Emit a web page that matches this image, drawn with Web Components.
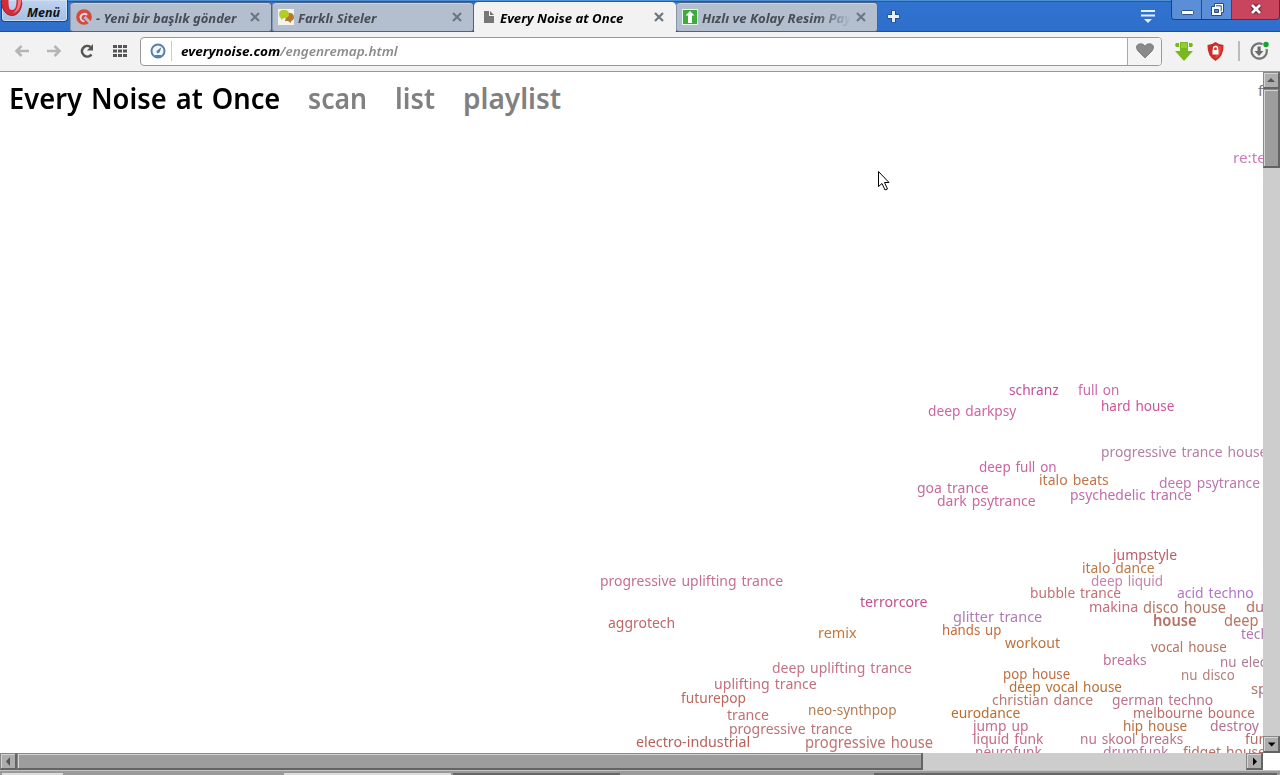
<!DOCTYPE html>
<html lang="tr">
<head>
<meta charset="utf-8">
<title>Every Noise at Once</title>
<style>
  html, body { margin: 0; height: 100%; overflow: hidden; background: #fff; }
  body { font-family: "Noto Sans", "Open Sans", sans-serif; }
</style>
</head>
<body>
<browser-window></browser-window>

<script>
// Text squeezed or stretched to a given width
class FitText extends HTMLElement {
  constructor() {
    super();
    this.attachShadow({ mode: 'open' });
    this.shadowRoot.innerHTML = `
      <style>
        :host { display: inline-block; flex: none; white-space: nowrap; }
        span { display: inline-block; vertical-align: top; transform-origin: 0 50%; }
      </style><span><slot></slot></span>`;
  }

  connectedCallback() {
    const width = Number(this.getAttribute('width'));
    if (!width) return;
    const span = this.shadowRoot.querySelector('span');
    const natural = span.offsetWidth;
    this.style.width = width + 'px';
    if (natural) span.style.transform = `scaleX(${width / natural})`;
  }
}

class BrowserTab extends HTMLElement {
  constructor() {
    super();
    this.attachShadow({ mode: 'open' });
    this.shadowRoot.innerHTML = `
      <style>
        :host {
          display: flex;
          align-items: center;
          box-sizing: border-box;
          width: 202px;
          height: 30px;
          padding: 0 11px 0 5px;
          gap: 4px;
          background: #b3bfcf;
          border: 1px solid #49648d;
          border-left-color: #8795aa;
          border-radius: 4px 4px 3px 3px;
          box-shadow: inset 0 1px #cbd4df;
          color: #484d55;
          font: italic 700 12.5px/20px "Noto Sans", sans-serif;
        }
        :host([active]) {
          background: #f2f2f2;
          border-color: #f2f2f2;
          border-radius: 4px 4px 0 0;
          box-shadow: none;
          color: #000;
        }
        .icon { display: flex; flex: none; width: 16px; height: 16px; }
        .label { flex: 1; min-width: 0; overflow: hidden; height: 20px; margin-top: 4px; }
        :host([fade]) .label { -webkit-mask-image: linear-gradient(90deg, #000 115px, transparent 149px); mask-image: linear-gradient(90deg, #000 115px, transparent 149px); }
        .close { flex: none; width: 10px; height: 10px; }
      </style>
      <div class="icon"><slot name="icon"></slot></div>
      <div class="label"><slot></slot></div>
      <svg class="close" viewBox="0 0 10 10"><path d="M1 1l8 8M9 1l-8 8" stroke="#6f7680" stroke-width="2.2"/></svg>
    `;
  }
}

class TabStrip extends HTMLElement {
  constructor() {
    super();
    this.attachShadow({ mode: 'open' });
    this.shadowRoot.innerHTML = `
      <style>
        :host {
          display: flex;
          align-items: flex-start;
          box-sizing: border-box;
          height: 32px;
          background: linear-gradient(#4d8fd0 0, #4d8fd0 1px, #275a9c 1px, #275a9c 2px, #3273d0 2px, #2f6fcb 31px, #234f93 31px);
        }
        svg { display: block; flex: none; }
        .menu {
          display: flex;
          box-sizing: border-box;
          width: 67px;
          height: 22px;
          margin-left: 1px;
          border: 1px solid #1e467e;
          border-top: 0;
          border-radius: 0 0 4px 4px;
          background: linear-gradient(#c0d4ee, #a3bee5);
          box-shadow: inset 0 0 0 1px #cfdff3;
          color: #111;
          font: italic 700 12.5px/25px "Noto Sans", sans-serif;
        }
        .menu svg { width: 25px; height: 18px; }
        .tabs { display: flex; margin: 2px 0 0 2px; }
        .add { margin: 10px 0 0 9px; }
        .panel { margin: 9px 15px 0 auto; }
        .controls {
          display: flex;
          width: 109px;
          height: 20px;
          box-sizing: border-box;
          border: 1px solid #1f3f70;
          border-top: 0;
          border-radius: 0 0 4px 4px;
          overflow: hidden;
        }
        .controls div { display: flex; justify-content: center; background: #5a8fd8; border-right: 1px solid #274b83; width: 29px; }
        .controls .x { background: #c9445d; flex: 1; border: 0; }
      </style>
      <div class="menu">
        <svg viewBox="0 0 25 18">
          <path d="M-1 0C-1 10 4 15.500 10 15.500S20 10 20 0h-5.500c0 7-1.500 10-4.500 10S6.500 7 6.500 0z" fill="#d42c39"/>
          <path d="M16 0h3c0 8-3 12-8 13c4-3 5-7 5-13z" fill="#ee7b83"/>
          <path d="M0 5c1 6 5 10.500 10 10.500s9-4 10-13" fill="none" stroke="#8f1823" stroke-width=".8"/>
        </svg>
        <fit-text width="33">Menü</fit-text>
      </div>
      <div class="tabs">
        <browser-tab>
          <svg slot="icon" width="16" height="16" viewBox="0 0 16 16"><circle cx="8" cy="8" r="7.800" fill="#d9483b"/><path d="M4.500 8.500A3.800 3.800 0 0 1 11 6" fill="none" stroke="#dde0e8" stroke-width="2"/><path d="M4.500 8q0 4 4 4.500" fill="none" stroke="#dde0e8" stroke-width="1.600"/><path d="M8.500 8l6 6" stroke="#b3bfcf" stroke-width="3"/></svg>
          <fit-text width="141">- Yeni bir başlık gönder</fit-text>
        </browser-tab>
        <browser-tab>
          <svg slot="icon" width="16" height="16" viewBox="0 0 16 16"><path d="M0 0h16v16H0z" fill="#f3f4ef"/><path d="M9 4h4q3 1 3 4t-3 4v2l-3-2H7z" fill="#b8792e"/><path d="M4 1h4q3 1 3 4t-3 4H6l-3 2V9Q1 8 1 5t3-4z" fill="#b4cc26"/></svg>
          <fit-text width="79">Farklı Siteler</fit-text>
        </browser-tab>
        <browser-tab active>
          <svg slot="icon" width="16" height="16" viewBox="0 0 16 16"><path d="M4 2h5v5h5v7H4z" fill="#777"/><path d="M10 2l4 4h-4z" fill="#777"/></svg>
          <fit-text width="123">Every Noise at Once</fit-text>
        </browser-tab>
        <browser-tab fade>
          <svg slot="icon" width="16" height="16" viewBox="0 0 16 16"><path d="M0 0h16v16H0z" fill="#eef7ee"/><path d="M1 1h14v14H1z" fill="#3eab3d"/><path d="M8 2l4.500 4.500H10V14H6V6.500H3.500z" fill="#fff"/></svg>
          <fit-text width="149">Hızlı ve Kolay Resim Pay</fit-text>
        </browser-tab>
      </div>
      <svg class="add" width="13" height="13" viewBox="0 0 13 13"><path d="M6.500 .5v12M.5 6.500h12" stroke="#1f4d93" stroke-width="5"/><path d="M6.500 1v11M1 6.500h11" stroke="#e6effa" stroke-width="3"/></svg>
      <svg class="panel" width="16" height="15" viewBox="0 0 16 15"><path d="M1 2h14M1 6.500h14" stroke="#e6effa" stroke-width="2"/><path d="M4 10h8l-4 4z" fill="#e6effa"/></svg>
      <div class="controls">
        <div><svg width="14" height="19"><rect x="1.500" y="10.500" width="12" height="4" rx="1" fill="#fff" stroke="#2d5188"/></svg></div>
        <div><svg width="14" height="19"><path d="M4.500 3.500h9v9h-2v3h-10v-9h3z" fill="#fff" stroke="#244c86"/><path d="M4.500 9.500h4v3h-4z" fill="#5a8fd8" stroke="#244c86"/><path d="M6 5.800h5.200v5.500" fill="none" stroke="#244c86"/></svg></div>
        <div class="x"><svg width="14" height="19"><path d="M3 5l8 8M11 5l-8 8" stroke="#6e2637" stroke-width="5"/><path d="M3 5l8 8M11 5l-8 8" stroke="#fff" stroke-width="2.700"/></svg></div>
      </div>
    `;
  }
}

class AddressBar extends HTMLElement {
  constructor() {
    super();
    this.attachShadow({ mode: 'open' });
    this.shadowRoot.innerHTML = `
      <style>
        :host {
          display: flex;
          align-items: center;
          box-sizing: border-box;
          height: 40px;
          padding: 0 11px 1px 14px;
          background: #f2f2f2;
          border-bottom: 1px solid #989898;
        }
        svg { display: block; flex: none; }
        .nav { display: flex; align-items: center; gap: 16.6px; width: 126px; }
        .field {
          display: flex;
          align-items: center;
          box-sizing: border-box;
          width: 1022px;
          height: 29px;
          padding-left: 9px;
          background: #fff;
          border: 1px solid #999;
          border-radius: 4px;
          font: italic 600 13px/20px "Noto Sans", sans-serif;
          color: #8c8c8c;
        }
        .field b { display: flex; font-weight: 700; color: #000; }
        .rule { width: 1px; height: 20px; margin: 0 9px 0 5px; background: #ccc; }
        .heart {
          display: flex;
          align-items: center;
          justify-content: center;
          width: 33px;
          height: 27px;
          margin-left: auto;
          border-left: 1px solid #aaa;
          border-radius: 0 3px 3px 0;
          background: #f4f4f4;
        }
        .tools { display: flex; align-items: center; margin-left: 13px; }
      </style>
      <div class="nav">
        <svg width="16" height="16" viewBox="0 0 16 16"><path d="M15 8H3M7.500 3l-5 5 5 5" fill="none" stroke="#b5b5b5" stroke-width="2.600"/></svg>
        <svg width="16" height="16" viewBox="0 0 16 16"><path d="M0 8h12M7.500 3l5 5-5 5" fill="none" stroke="#b5b5b5" stroke-width="2.600"/></svg>
        <svg width="16" height="16" viewBox="0 0 16 16"><path d="M12.500 11.500A5.300 5.300 0 1 1 11.500 4" fill="none" stroke="#555" stroke-width="2.600"/><path d="M14 1v6.500H8z" fill="#555"/></svg>
        <svg width="16" height="16" viewBox="0 0 16 16"><g fill="#555"><path d="M1 2h4v3H1zM6 2h4v3H6zM11 2h4v3h-4zM1 6.500h4v3H1zM6 6.500h4v3H6zM11 6.500h4v3h-4zM1 11h4v3H1zM6 11h4v3H6zM11 11h4v3h-4z"/></g></svg>
      </div>
      <div class="field">
        <svg width="16" height="16" viewBox="0 0 16 16"><circle cx="8" cy="8" r="6.500" fill="#f4f8fc" stroke="#5580ae" stroke-width="2"/><path d="M11.500 4L9.500 9.500 7 10.500 6.500 8z" fill="#5580ae"/><path d="M5 13h6" stroke="#5580ae" stroke-width="2"/></svg>
        <div class="rule"></div>
        <b><fit-text width="99">everynoise.com</fit-text></b><fit-text width="118">/engenremap.html</fit-text>
        <div class="heart">
          <svg width="18" height="16" viewBox="0 0 18 16"><path d="M9 15L2 8C-1 4 1 .8 4.500 .8C7 .8 8.500 2 9 3.500C9.500 2 11 .8 13.500 .8C17 .8 19 4 16 8z" fill="#8a8a8a" stroke="#707070" stroke-width=".8"/></svg>
        </div>
      </div>
      <div class="tools">
        <svg width="18" height="19" viewBox="0 0 18 19"><path d="M5 0h8v9h5l-9 10L0 9h5z" fill="#78b81e"/><path d="M1 1h3v4H1l-1-2zM17 1h-3v4h3l1-2z" fill="#78b81e"/><path d="M6 1h6v5H6z" fill="#91cc35"/></svg>
        <svg style="margin-left:14px" width="17" height="19" viewBox="0 0 17 19"><path d="M8.500 0q4 3 8 3 .5 11-8 16Q0 14 .5 3q4 0 8-3z" fill="#c92e2a"/><path d="M8.500 2q3 2 6 2.500 0 9-6 12z" fill="#e04b3e"/><path d="M5.500 8h6v4.500h-6z" fill="#fff"/><path d="M6.500 8V6.500a2 2 0 0 1 4 0V8" fill="none" stroke="#fff" stroke-width="1.300"/></svg>
        <div style="width:2px;height:20px;background:#bbb;margin:0 10px 0 14px"></div>
        <svg width="19" height="20" viewBox="0 0 19 20"><path d="M12.500 3.200A7.600 7.600 0 1 0 16.500 8" fill="none" stroke="#747474" stroke-width="2.200"/><path d="M7.500 5.500h3.200V10h2.800L9 15 4.500 10h3z" fill="#6c6c6c"/><circle cx="16" cy="3.500" r="2.700" fill="#14a32c"/></svg>
      </div>
    `;
  }
}

// Classic grey scroll bar: axis="x" or axis="y"
class ScrollBar extends HTMLElement {
  constructor() {
    super();
    this.attachShadow({ mode: 'open' });
  }

  connectedCallback() {
    const horizontal = this.getAttribute('axis') === 'x';
    const size = horizontal ? 'width' : 'height';
    const start = horizontal ? 'M9 3L5 7.500l4 4.500z' : 'M3 9h8L7 5z';
    const end = horizontal ? 'M6 3.500v8l4-4z' : 'M4 5.500h7.500L7.700 9.500z';
    this.shadowRoot.innerHTML = `
      <style>
        :host { display: flex; flex-direction: ${horizontal ? 'row' : 'column'}; background: #cdcdcd; }
        div {
          box-sizing: border-box;
          flex: none;
          background: #9d9d9d;
          border: 1px solid #646464;
          border-width: 1px 2px 2px 1px;
          border-top-color: #888;
          border-left-color: #888;
          box-shadow: inset 1px 1px #d4d4d4;
          overflow: hidden;
        }
        .start, .end { width: 17px; height: 17px; }
        .start { background: #adadad; }
        .thumb { ${size}: ${this.getAttribute('thumb')}px; }
        .end { background: #adadad; margin-${horizontal ? 'left' : 'top'}: auto; }
        svg { display: block; }
      </style>
      <div class="start"><svg width="14" height="14"><path d="${start}" fill="#555"/></svg></div>
      <div class="thumb"></div>
      <div class="end"><svg width="14" height="14"><path d="${end}" fill="#000"/></svg></div>
    `;
  }
}

// [name, x, baseline, width, colour, font size, weight]
// width 0 keeps the natural width
const genres = [
  ['f', 1258, 96, 0, '#777777'],
  ['re:te', 1233, 163, 33, '#cf7ab5'],
  ['schranz', 1009, 395, 50, '#c44f9e'],
  ['full on', 1078, 395, 41, '#cb69a8'],
  ['hard house', 1101, 411, 73, '#cc5598'],
  ['deep darkpsy', 928, 416, 88, '#cc65a6'],
  ['progressive trance house', 1101, 457, 166, '#b47fa6'],
  ['deep full on', 979, 472, 78, '#ca64a5'],
  ['italo beats', 1039, 485, 70, '#c37545'],
  ['deep psytrance', 1159, 488, 101, '#bd76ae'],
  ['goa trance', 917, 493, 72, '#c26e9c'],
  ['psychedelic trance', 1070, 500, 122, '#c06dac'],
  ['dark psytrance', 937, 506, 99, '#ca679d'],
  ['jumpstyle', 1113, 560, 64, '#bf5d6a'],
  ['italo dance', 1082, 573, 73, '#bd7644'],
  ['progressive uplifting trance', 600, 586, 183, '#c66f90'],
  ['deep liquid', 1091, 586, 72, '#c683ad'],
  ['bubble trance', 1030, 598, 91, '#bf7175'],
  ['acid techno', 1177, 598, 77, '#b077c6'],
  ['terrorcore', 860, 607, 68, '#c3508e'],
  ['makina', 1089, 612, 49, '#c46d7d'],
  ['disco house', 1143, 613, 83, '#b07965', 15.5],
  ['du', 1246, 612, 0, '#b27176'],
  ['glitter trance', 953, 622, 89, '#b17bb5'],
  ['house', 1153, 626, 44, '#b77065', 16, 600],
  ['deep', 1224, 626, 35, '#b77560', 15.5],
  ['aggrotech', 608, 628, 67, '#bf6764'],
  ['hands up', 942, 635, 59, '#c7693c'],
  ['remix', 818, 638, 39, '#c97534'],
  ['tech', 1241, 639, 28, '#b077b0'],
  ['workout', 1005, 648, 55, '#ba733e'],
  ['vocal house', 1151, 652, 76, '#b47562'],
  ['breaks', 1103, 665, 44, '#bd719a'],
  ['nu elec', 1220, 667, 46, '#af7994'],
  ['deep uplifting trance', 772, 673, 140, '#c17487'],
  ['pop house', 1003, 679, 67, '#bb7044'],
  ['nu disco', 1181, 680, 54, '#b4807a'],
  ['uplifting trance', 714, 689, 103, '#c36f7c'],
  ['deep vocal house', 1009, 692, 113, '#ba6f32'],
  ['sp', 1251, 694, 0, '#b27767'],
  ['futurepop', 681, 703, 65, '#bc685c'],
  ['christian dance', 992, 705, 101, '#b97777'],
  ['german techno', 1112, 705, 101, '#b9748b'],
  ['neo-synthpop', 808, 715, 89, '#b57b52'],
  ['eurodance', 951, 718, 69, '#bb6d2b'],
  ['melbourne bounce', 1133, 718, 122, '#be6b68'],
  ['trance', 727, 720, 42, '#c37074'],
  ['jump up', 973, 731, 56, '#c76c8b'],
  ['hip house', 1123, 731, 64, '#b8703f'],
  ['destroy', 1210, 731, 49, '#b56f92'],
  ['progressive trance', 729, 734, 123, '#bb7278'],
  ['liquid funk', 973, 744, 70, '#c66c84'],
  ['nu skool breaks', 1080, 744, 103, '#b97387'],
  ['fun', 1245, 744, 22, '#b36d64'],
  ['electro-industrial', 636, 747, 114, '#b86158'],
  ['progressive house', 805, 748, 128, '#bb7471', 15.5],
  ['neurofunk', 975, 757, 67, '#c36b91'],
  ['drumfunk', 1103, 757, 65, '#b978a0'],
  ['fidget house', 1183, 757, 83, '#b66d65'],
];

class GenreMap extends HTMLElement {
  constructor() {
    super();
    this.attachShadow({ mode: 'open' });
    this.shadowRoot.innerHTML = `
      <style>
        :host { display: block; position: relative; overflow: hidden; background: #fff; }
        header {
          display: flex;
          gap: 28px;
          padding: 5px 0 0 9px;
          color: #808080;
          font: 600 28px/42px "Noto Sans", sans-serif;
          word-spacing: 2px;
        }
        header .title { color: #000; }
        .genre { position: absolute; line-height: 20px; word-spacing: 1.5px; }
      </style>
      <header>
        <fit-text class="title" width="271">Every Noise at Once</fit-text>
        <fit-text width="59">scan</fit-text>
        <fit-text width="40">list</fit-text>
        <fit-text width="98">playlist</fit-text>
      </header>
      ${genres.map(([name, x, baseline, width, color, size = 14.8, weight = 400]) =>
        `<fit-text class="genre" width="${width}" style="left:${x}px;top:${baseline - 72 - 16}px;color:${color};font-size:${size}px;font-weight:${weight}">${name}</fit-text>`
      ).join('')}
    `;
  }
}

class BrowserWindow extends HTMLElement {
  constructor() {
    super();
    this.attachShadow({ mode: 'open' });
    this.shadowRoot.innerHTML = `
      <style>
        :host { display: flex; flex-direction: column; position: relative; width: 1280px; height: 775px; overflow: hidden; }
        .page { display: grid; grid-template-columns: 1263px 17px; grid-template-rows: 681px 17px; background: #fff; }
        .taskbar { display: flex; height: 5px; background: #9a9a9a; box-shadow: inset 0 1px #c4c4c4; align-items: flex-end; }
        .taskbar i { height: 2px; background: #ddd; margin-left: 2px; }
        .taskbar i.dark { background: #666; }
        .cursor { position: absolute; left: 877px; top: 170px; }
      </style>
      <tab-strip></tab-strip>
      <address-bar></address-bar>
      <div class="page">
        <genre-map></genre-map>
        <scroll-bar axis="y" thumb="79"></scroll-bar>
        <scroll-bar axis="x" thumb="906"></scroll-bar>
      </div>
      <div class="taskbar">
        <i style="width:61px"></i>
        <i style="width:167px;margin-left:221px"></i>
        <i class="dark" style="width:167px"></i>
        <i class="dark" style="width:403px;margin-left:254px"></i>
      </div>
      <svg class="cursor" width="14" height="22" viewBox="0 0 14 22"><path d="M1.500 1.500v15l3.500-3 3 6.500 2.500-1-3-6.500h4.500z" fill="#fff" stroke="#000"/></svg>
    `;
  }
}

customElements.define('fit-text', FitText);
customElements.define('browser-tab', BrowserTab);
customElements.define('tab-strip', TabStrip);
customElements.define('address-bar', AddressBar);
customElements.define('scroll-bar', ScrollBar);
customElements.define('genre-map', GenreMap);
customElements.define('browser-window', BrowserWindow);
</script>
</body>
</html>
